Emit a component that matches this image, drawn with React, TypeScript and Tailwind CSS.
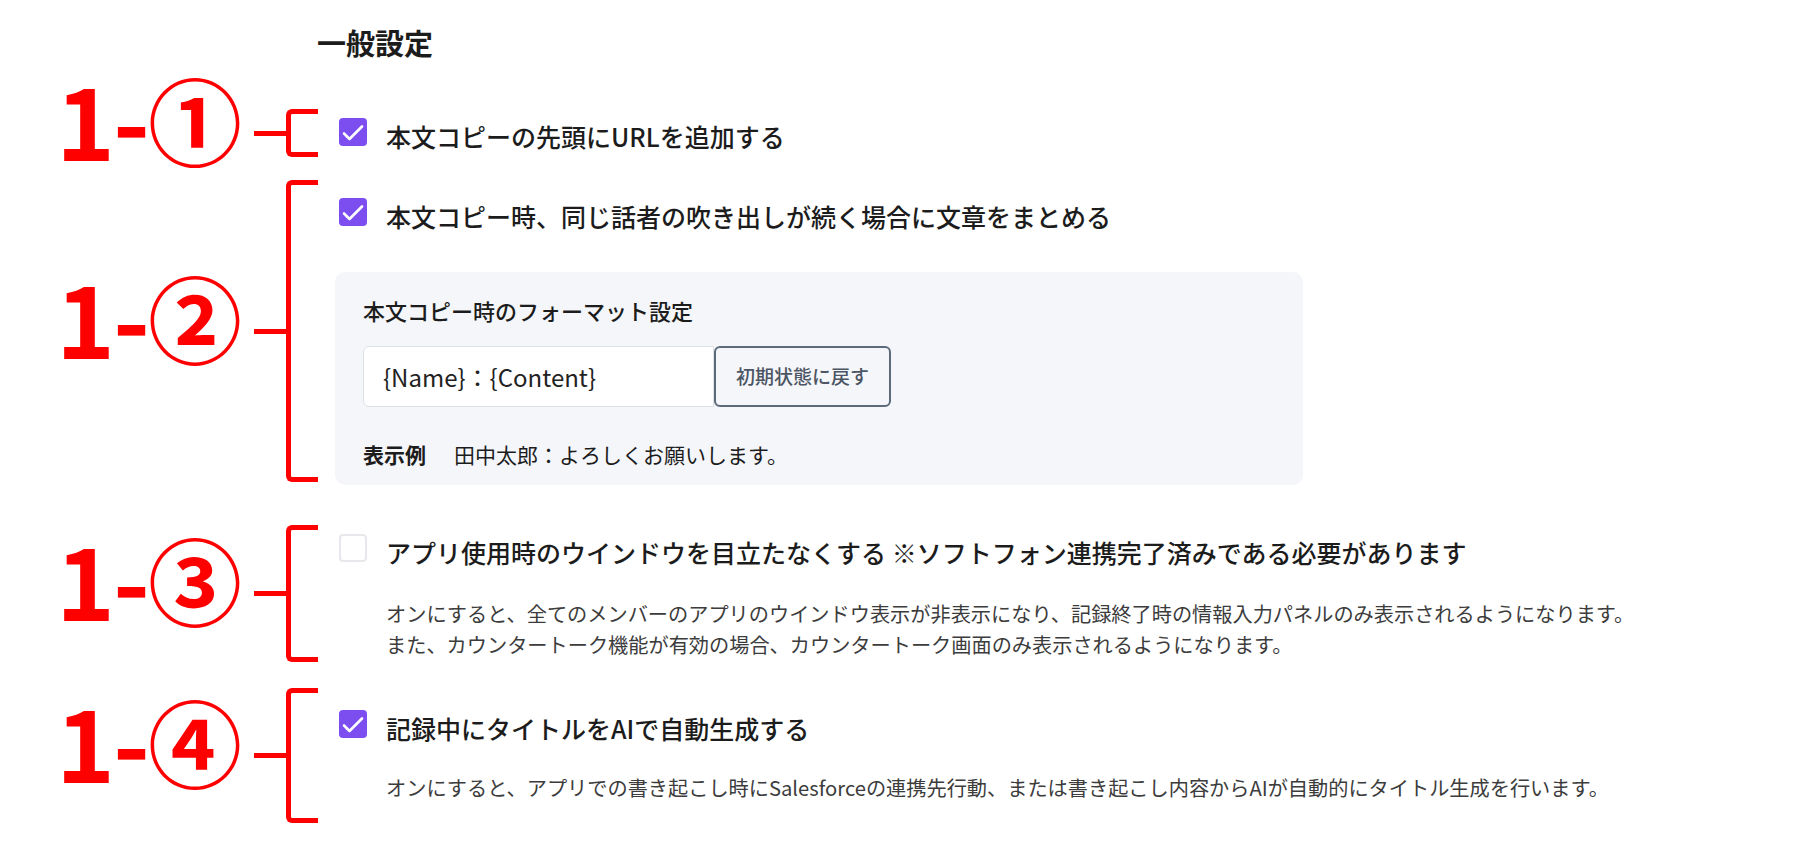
import type { ReactNode } from 'react';

const Check = ({ checked }: { checked: boolean }) =>
  checked ? (
    <span className="flex h-[28px] w-[28px] shrink-0 items-center justify-center rounded-[4px] bg-[#7c4ef0]">
      <svg width="28" height="28" viewBox="0 0 28 28" fill="none">
        <path
          d="M5 15.5l5.5 5.5L23 8.5"
          stroke="white"
          strokeWidth="2.6"
          strokeLinecap="round"
          strokeLinejoin="round"
        />
      </svg>
    </span>
  ) : (
    <span className="block h-[28px] w-[28px] shrink-0 rounded-[4px] border-2 border-[#e6e8eb] bg-white" />
  );

type RowProps = {
  mark: string;
  bracket: string;
  pad: string;
  className?: string;
  children: ReactNode;
};

// red annotation ("1-①" + bracket) on the left, setting content on the right
const Row = ({ mark, bracket, pad, className = '', children }: RowProps) => (
  <div className={`flex items-start ${className}`}>
    <div className={`flex w-[318px] shrink-0 items-center pl-[56px] ${bracket}`}>
      <span className="mb-[31px] flex items-center whitespace-nowrap font-bold leading-none text-[#ff0000]">
        <span className="text-[100px] tracking-[-2px]">1-</span>
        <span className="text-[94px]">{mark}</span>
      </span>
      <span className="ml-auto h-[5px] w-[33px] bg-[#ff0000]" />
      <span className="-ml-px h-full w-[32px] rounded-l-[6px] border-y-[5px] border-l-[5px] border-[#ff0000]" />
    </div>
    <div className={`ml-[17px] ${pad}`}>{children}</div>
  </div>
);

const Option = ({ checked, children }: { checked: boolean; children: ReactNode }) => (
  <div className="flex items-start">
    <span className="ml-[4px] flex shrink-0">
      <Check checked={checked} />
    </span>
    <span className="ml-[19px] mt-[3px] whitespace-nowrap text-[25px] font-medium leading-[30px] text-[#1c1c1c]">
      {children}
    </span>
  </div>
);

const Desc = ({ className, children }: { className: string; children: ReactNode }) => (
  <p className={`pl-[51px] text-[20.2px] leading-[31px] whitespace-nowrap text-[#3c3c3c] ${className}`}>
    {children}
  </p>
);

export default function App() {
  return (
    <div className="min-h-screen bg-white font-['Noto_Sans_CJK_JP','Noto_Sans',sans-serif] text-[#1c1c1c]">
      <h1 className="ml-[317px] pt-[22px] text-[29px] font-bold leading-[40px]">一般設定</h1>

      <Row mark="①" bracket="h-[48px]" pad="pt-[9px]" className="mt-[47px]">
        <Option checked>本文コピーの先頭にURLを追加する</Option>
      </Row>

      <Row mark="②" bracket="h-[302px]" pad="pt-[18px]" className="mt-[23px]">
        <Option checked>本文コピー時、同じ話者の吹き出しが続く場合に文章をまとめる</Option>
        <div className="mt-[41px] w-[968px] rounded-[10px] bg-[#f5f6fa] px-[28px] pb-[16px] pt-[23px]">
          <p className="text-[22px] font-medium leading-[30px]">本文コピー時のフォーマット設定</p>
          <div className="mt-[21px] flex">
            <input
              readOnly
              value="{Name}：{Content}"
              className="h-[61px] w-[351px] rounded-l-[6px] border border-[#dde1e6] bg-white px-[19px] text-[24px] text-[#222] outline-none"
            />
            <button className="h-[61px] w-[177px] rounded-[6px] border-2 border-[#5c6b7a] bg-[#f5f6fa] text-[19px] font-medium text-[#4b5563]">
              初期状態に戻す
            </button>
          </div>
          <div className="mt-[32px] flex text-[21px] leading-[30px]">
            <span className="font-bold">表示例</span>
            <span className="ml-[28px]">田中太郎：よろしくお願いします。</span>
          </div>
        </div>
      </Row>

      <Row mark="③" bracket="h-[137px]" pad="pt-[9px]" className="mt-[40px]">
        <Option checked={false}>
          アプリ使用時のウインドウを目立たなくする ※ソフトフォン連携完了済みである必要があります
        </Option>
        <Desc className="mt-[31px]">
          オンにすると、全てのメンバーのアプリのウインドウ表示が非表示になり、記録終了時の情報入力パネルのみ表示されるようになります。
          <br />
          また、カウンタートーク機能が有効の場合、カウンタートーク画面のみ表示されるようになります。
        </Desc>
      </Row>

      <Row mark="④" bracket="h-[135px]" pad="pt-[22px]" className="mt-[26px]">
        <Option checked>記録中にタイトルをAIで自動生成する</Option>
        <Desc className="mt-[29px]">
          オンにすると、アプリでの書き起こし時にSalesforceの連携先行動、または書き起こし内容からAIが自動的にタイトル生成を行います。
        </Desc>
      </Row>
    </div>
  );
}
